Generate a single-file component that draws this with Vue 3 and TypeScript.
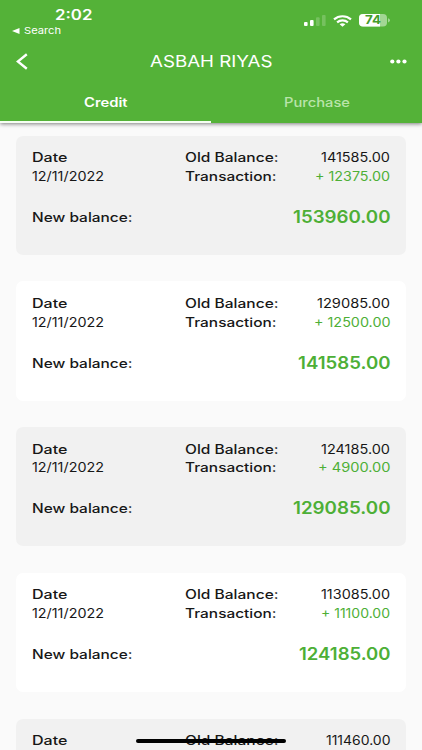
<script setup lang="ts">
import { h } from 'vue'

interface Entry {
  date?: string
  old: string
  oldWidth: number
  change?: string
  changeWidth?: number
  total?: string
  totalWidth?: number
}

interface LabelProps {
  text: string
  width: number
  size: number
  height: number
  base: number
  weight?: number
}

// A text label set to an exact width, giving the wide letterforms of the design.
const WideText = (p: LabelProps) =>
  h('svg', { width: p.width, height: p.height, class: 'wide-text' }, [
    h(
      'text',
      {
        x: 0,
        y: p.base,
        'font-size': p.size,
        'font-weight': p.weight ?? 400,
        textLength: p.width,
        lengthAdjust: 'spacingAndGlyphs',
        fill: 'currentColor',
      },
      p.text,
    ),
  ])
WideText.props = ['text', 'width', 'size', 'height', 'base', 'weight']

const entries: Entry[] = [
  { date: '12/11/2022', old: '141585.00', oldWidth: 69, change: '+ 12375.00', changeWidth: 75, total: '153960.00', totalWidth: 97.5 },
  { date: '12/11/2022', old: '129085.00', oldWidth: 73, change: '+ 12500.00', changeWidth: 76.5, total: '141585.00', totalWidth: 92.5 },
  { date: '12/11/2022', old: '124185.00', oldWidth: 69, change: '+ 4900.00', changeWidth: 72.5, total: '129085.00', totalWidth: 97.5 },
  { date: '12/11/2022', old: '113085.00', oldWidth: 69, change: '+ 11100.00', changeWidth: 69, total: '124185.00', totalWidth: 91.5 },
  { old: '111460.00', oldWidth: 64.5 },
]
</script>

<template>
  <div class="screen">
    <header class="header">
      <div class="status">
        <div class="clock">
          <WideText text="2:02" :width="37.5" :size="14" :height="18" :base="13.3" :weight="600" />
          <div class="back-app">
            <svg width="8" height="6" viewBox="0 0 8 6"><path d="M0 3L7.5 0V6Z" fill="#fff" /></svg>
            <WideText text="Search" :width="37" :size="9.3" :height="12" :base="9.3" />
          </div>
        </div>
        <div class="signals">
          <svg width="22" height="13" viewBox="0 0 22 13" fill="#fff">
            <rect x="0" y="8" width="3.6" height="4" rx="1" />
            <rect x="6" y="6" width="3.6" height="6" rx="1" />
            <rect x="12" y="3.3" width="3.6" height="8.7" rx="1" opacity=".2" />
            <rect x="18" y="1" width="3.6" height="11" rx="1" opacity=".2" />
          </svg>
          <svg class="wifi" width="19" height="12" viewBox="0 0 19 12" fill="none" stroke="#fff" stroke-width="2.2">
            <path d="M1 4.4C5.8 .2 13.2 .2 18 4.4" />
            <path d="M4.1 7.3C7.2 4.7 11.8 4.7 14.9 7.3" />
            <path d="M6.6 9.3C8.2 7.9 10.8 7.9 12.4 9.3L9.5 11.8Z" fill="#fff" stroke="none" />
          </svg>
          <svg class="battery" width="32" height="13" viewBox="0 0 32 13">
            <rect x="0" y="0" width="28" height="12.6" rx="4" fill="#a3d694" />
            <path d="M4 0H21V12.6H4Q0 12.6 0 8.6V4Q0 0 4 0Z" fill="#fff" />
            <path d="M29 4.3Q31 5 31 6.3Q31 7.7 29 8.4Z" fill="#a3d694" />
            <text x="6" y="10.4" font-size="11.5" font-weight="700" textLength="16" lengthAdjust="spacingAndGlyphs" fill="#459c2c">74</text>
          </svg>
        </div>
      </div>
      <div class="toolbar">
        <svg width="12" height="17" viewBox="0 0 12 17" fill="none" stroke="#fff" stroke-width="2.4"><path d="M10.8 1.2L1.8 8.5L10.8 15.8" /></svg>
        <WideText class="title" text="ASBAH RIYAS" :width="122.5" :size="16.5" :height="22" :base="17" />
        <svg width="17" height="5" viewBox="0 0 17 5" fill="#fff">
          <ellipse cx="2.3" cy="2.5" rx="2.1" ry="1.9" /><ellipse cx="8.4" cy="2.5" rx="2.1" ry="1.9" /><ellipse cx="14.5" cy="2.5" rx="2.1" ry="1.9" />
        </svg>
      </div>
      <nav class="tabs">
        <div class="tab active"><WideText text="Credit" :width="43.5" :size="12.5" :height="18" :base="13.5" :weight="600" /></div>
        <div class="tab"><WideText text="Purchase" :width="66" :size="12.5" :height="18" :base="13.5" :weight="500" /></div>
      </nav>
    </header>

    <main class="list">
      <article v-for="(e, i) in entries" :key="i" class="card" :class="{ shaded: i % 2 === 0 }">
        <div class="details">
          <div class="date">
            <WideText text="Date" :width="35.5" :size="12.6" :height="18.7" :base="14.2" :weight="500" />
            <WideText v-if="e.date" :text="e.date" :width="72" :size="12.6" :height="18.7" :base="14.2" />
          </div>
          <div class="labels">
            <WideText text="Old Balance:" :width="93.5" :size="12.6" :height="18.7" :base="14.2" :weight="500" />
            <WideText v-if="e.change" text="Transaction:" :width="91.5" :size="12.6" :height="18.7" :base="14.2" :weight="500" />
          </div>
          <div class="amounts">
            <WideText :text="e.old" :width="e.oldWidth" :size="12.6" :height="18.7" :base="14.2" />
            <WideText v-if="e.change" class="green" :text="e.change" :width="e.changeWidth ?? 75" :size="12.6" :height="18.7" :base="14.2" />
          </div>
        </div>
        <div v-if="e.total" class="total">
          <WideText text="New balance:" :width="100.5" :size="12.6" :height="24" :base="17.3" :weight="500" />
          <WideText class="green" :text="e.total" :width="e.totalWidth ?? 97" :size="17" :height="24" :base="18.4" :weight="600" />
        </div>
      </article>
    </main>
    <div class="home-indicator"></div>
  </div>
</template>

<style>
body {
  margin: 0;
  overflow: hidden;
}
</style>

<style scoped>
.screen {
  position: relative;
  width: 422px;
  height: 750px;
  overflow: hidden;
  display: flex;
  flex-direction: column;
  background: #fafafa;
  color: #171717;
  font-family: Inter, "Liberation Sans", sans-serif;
}
svg {
  display: block;
  flex: none;
}
.wide-text {
  overflow: visible;
}
.header {
  flex: none;
  height: 122.5px;
  box-sizing: border-box;
  background: #54b238;
  color: #fff;
  box-shadow: 0 1px 4px rgba(0, 0, 0, 0.5);
  z-index: 1;
}
.status {
  display: flex;
  justify-content: space-between;
  height: 42px;
  padding: 6.5px 31px 0 12px;
  box-sizing: border-box;
}
.clock > .wide-text {
  margin-left: 42.5px;
}
.back-app {
  display: flex;
  align-items: center;
  gap: 3.5px;
}
.signals {
  display: flex;
  align-items: flex-start;
  padding-top: 7.5px;
}
.wifi {
  margin-left: 7.5px;
  margin-top: 0.5px;
}
.battery {
  margin-left: 7px;
}
.toolbar {
  display: flex;
  align-items: center;
  justify-content: space-between;
  height: 38px;
  padding: 0 15.5px 0 16px;
}
.title {
  margin-left: 4px;
}
.tabs {
  display: grid;
  grid-template-columns: 1fr 1fr;
  height: 42.5px;
}
.tab {
  display: flex;
  justify-content: center;
  align-items: flex-start;
  padding-top: 13px;
  box-sizing: border-box;
  color: #b9e4aa;
}
.active {
  color: #fff;
  border-bottom: 2px solid #f5fff2;
}
.list {
  display: flex;
  flex-direction: column;
  gap: 26.4px;
  padding: 13.3px 16px 0;
}
.card {
  flex: none;
  height: 119.3px;
  box-sizing: border-box;
  padding: 12.5px 16px 0 15.5px;
  border-radius: 7px;
  background: #fff;
}
.shaded {
  background: #f1f1f1;
}
.details {
  display: grid;
  grid-template-columns: 153.5px 94px 1fr;
}
.amounts {
  display: flex;
  flex-direction: column;
  align-items: flex-end;
}
.total {
  display: flex;
  justify-content: space-between;
  padding-top: 19.3px;
}
.green {
  color: #4daf36;
}
.home-indicator {
  position: absolute;
  left: 136px;
  top: 739px;
  width: 150px;
  height: 4px;
  border-radius: 2px;
  background: #000;
}
</style>
